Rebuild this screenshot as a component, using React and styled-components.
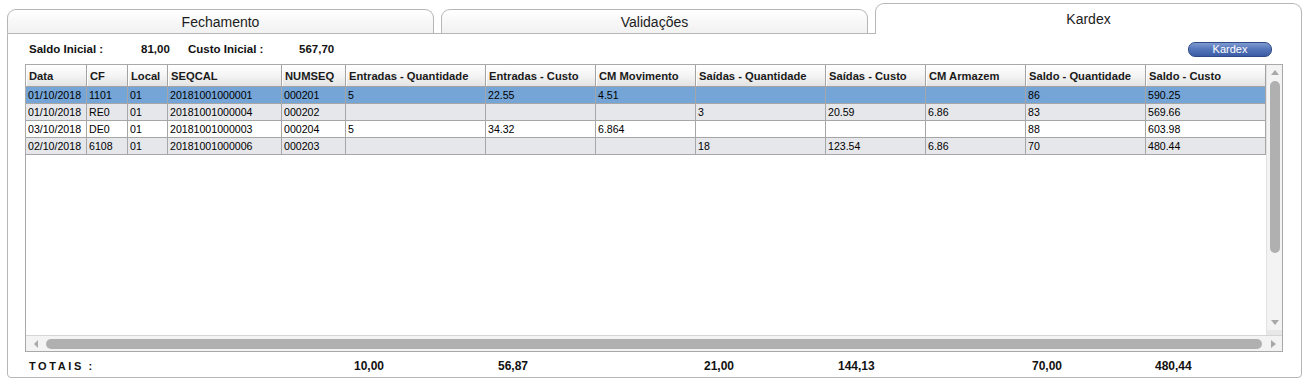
import React from 'react';
import styled, { createGlobalStyle } from 'styled-components';

const Global = createGlobalStyle`
  html, body { margin: 0; padding: 0; background: #ffffff; }
  body { font-family: "Liberation Sans", Arial, sans-serif; color: #000; }
  * { box-sizing: border-box; }
`;

const COLS = [61, 41, 40, 114, 64, 140, 110, 100, 130, 100, 100, 120, 120];
const TEMPLATE = COLS.map((c) => `${c}px`).join(' ');

const HEADERS = [
  'Data', 'CF', 'Local', 'SEQCAL', 'NUMSEQ', 'Entradas - Quantidade', 'Entradas - Custo',
  'CM Movimento', 'Saídas - Quantidade', 'Saídas - Custo', 'CM Armazem', 'Saldo - Quantidade', 'Saldo - Custo',
];

const ROWS = [
  ['01/10/2018', '1101', '01', '20181001000001', '000201', '5', '22.55', '4.51', '', '', '', '86', '590.25'],
  ['01/10/2018', 'RE0', '01', '20181001000004', '000202', '', '', '', '3', '20.59', '6.86', '83', '569.66'],
  ['03/10/2018', 'DE0', '01', '20181001000003', '000204', '5', '34.32', '6.864', '', '', '', '88', '603.98'],
  ['02/10/2018', '6108', '01', '20181001000006', '000203', '', '', '', '18', '123.54', '6.86', '70', '480.44'],
];

const TOTALS = [
  { col: 6, value: '10,00', indent: 8 },
  { col: 7, value: '56,87', indent: 12 },
  { col: 9, value: '21,00', indent: 8 },
  { col: 10, value: '144,13', indent: 12 },
  { col: 12, value: '70,00', indent: 6 },
  { col: 13, value: '480,44', indent: 9 },
];

const Page = styled.div`
  width: 1302px;
  padding: 3px 0 0 7px;
`;

const TabBar = styled.div`
  display: flex;
  align-items: flex-end;
  gap: 7px;
  height: 30px;
  position: relative;
  z-index: 1;
`;

const Tab = styled.div`
  flex: 1;
  height: ${(p) => (p.$active ? 31 : 24)}px;
  margin-bottom: ${(p) => (p.$active ? -1 : 0)}px;
  border: 1px solid #b6b6b6;
  border-bottom: none;
  border-radius: 9px 9px 0 0;
  background: ${(p) => (p.$active ? '#ffffff' : 'linear-gradient(#ffffff, #f1f1f1)')};
  display: flex;
  align-items: center;
  justify-content: center;
  font-size: 14px;
  color: #1c1c1c;
`;

const Panel = styled.div`
  width: 1295px;
  height: 345px;
  border: 1px solid #b6b6b6;
  border-radius: 0 0 4px 4px;
  padding: 7px 18px 0 17px;
  background: #fff;
`;

const InfoRow = styled.div`
  display: flex;
  align-items: center;
  height: 16px;
  padding: 0 11px 0 4px;
  font-size: 11.5px;
  font-weight: bold;
  color: #111;
`;

const InfoItem = styled.span`
  width: ${(p) => p.$w}px;
  white-space: nowrap;
`;

const KardexButton = styled.button`
  margin-left: auto;
  width: 84px;
  height: 15px;
  padding: 0;
  border: 1px solid #2f4b86;
  border-radius: 7px;
  background: linear-gradient(#7f9ad0 0%, #5777bb 45%, #3b5ca4 100%);
  color: #ffffff;
  font-family: "Liberation Sans", Arial, sans-serif;
  font-size: 11px;
  line-height: 13px;
`;

const TableBox = styled.div`
  margin-top: 7px;
  width: 1258px;
  height: 288px;
  border: 1px solid #a9a9a9;
  display: flex;
  flex-direction: column;
`;

const TopArea = styled.div`
  display: flex;
  height: 270px;
`;

const Viewport = styled.div`
  width: 1240px;
  height: 270px;
  overflow: hidden;
  background: #fff;
`;

const Grid = styled.div`
  display: grid;
  grid-template-columns: ${TEMPLATE};
`;

const HeadCell = styled.div`
  height: 22px;
  display: flex;
  align-items: center;
  padding-left: 3px;
  border-right: 1px solid #a3a3a3;
  border-bottom: 1px solid #a3a3a3;
  background: linear-gradient(#ffffff 0%, #f4f4f4 50%, #e3e3e3 100%);
  box-shadow: inset 1px 1px 0 #ffffff;
  font-size: 11.2px;
  font-weight: bold;
  color: #1a1a1a;
  white-space: nowrap;
  overflow: hidden;
`;

const Cell = styled.div`
  height: 17px;
  display: flex;
  align-items: center;
  padding-left: 2px;
  border-right: 1px solid #a6a6a6;
  border-bottom: 1px solid #a6a6a6;
  background: ${(p) => (p.$selected ? '#75a5d6' : p.$alt ? '#e5e7eb' : '#ffffff')};
  font-size: 10.6px;
  color: #000;
  white-space: nowrap;
  overflow: hidden;
`;

const VScroll = styled.div`
  width: 16px;
  height: 270px;
  display: flex;
  flex-direction: column;
  align-items: center;
  background: #f3f3f3;
  border-left: 1px solid #e2e2e2;
`;

const ArrowBox = styled.div`
  width: ${(p) => p.$w || 15}px;
  height: ${(p) => p.$h || 15}px;
  display: flex;
  align-items: center;
  justify-content: center;
  flex-shrink: 0;
`;

const VThumb = styled.div`
  width: 10px;
  height: 172px;
  margin-top: 1px;
  border-radius: 5px;
  background: #b0b0b0;
`;

const VTrack = styled.div`
  flex: 1;
`;

const VCorner = styled.div`
  width: 15px;
  height: 5px;
  background: #e8e8e8;
`;

const HScroll = styled.div`
  height: 16px;
  display: flex;
  align-items: center;
  background: #f3f3f3;
  border-top: 1px solid #d4d4d4;
`;

const HThumb = styled.div`
  flex: 1;
  height: 10px;
  margin-right: 3px;
  border-radius: 5px;
  background: #b0b0b0;
`;

const TotalsRow = styled.div`
  display: grid;
  grid-template-columns: ${TEMPLATE};
  margin-top: 2px;
  height: 23px;
  padding-left: 1px;
  align-items: center;
  font-weight: bold;
  color: #111;
`;

const TotalsLabel = styled.div`
  grid-column: 1 / 6;
  padding-left: 3px;
  font-size: 11px;
  letter-spacing: 2.6px;
  word-spacing: -1px;
`;

const TotalValue = styled.div`
  grid-column: ${(p) => p.$col};
  padding-left: ${(p) => p.$indent}px;
  font-size: 12px;
`;

const Tri = ({ dir }) => {
  const pts = {
    up: '0,6 4,1 8,6',
    down: '0,1 4,6 8,1',
    left: '5,0 1,4 5,8',
    right: '1,0 6,4 1,8',
  }[dir];
  const horiz = dir === 'left' || dir === 'right';
  return (
    <svg width={horiz ? 7 : 8} height={horiz ? 8 : 7} viewBox={horiz ? '0 0 7 8' : '0 0 8 7'}>
      <polygon points={pts} fill="#a8a8a8" />
    </svg>
  );
};

export default function App() {
  return (
    <Page>
      <Global />
      <TabBar>
        <Tab>Fechamento</Tab>
        <Tab>Validações</Tab>
        <Tab $active>Kardex</Tab>
      </TabBar>
      <Panel>
        <InfoRow>
          <InfoItem $w={112}>Saldo Inicial :</InfoItem>
          <InfoItem $w={47}>81,00</InfoItem>
          <InfoItem $w={111}>Custo Inicial :</InfoItem>
          <InfoItem $w={60}>567,70</InfoItem>
          <KardexButton>Kardex</KardexButton>
        </InfoRow>
        <TableBox>
          <TopArea>
            <Viewport>
              <Grid>
                {HEADERS.map((h) => (
                  <HeadCell key={h}>{h}</HeadCell>
                ))}
                {ROWS.map((r, ri) =>
                  r.map((v, ci) => (
                    <Cell key={`${ri}-${ci}`} $selected={ri === 0} $alt={ri % 2 === 1}>
                      {v}
                    </Cell>
                  ))
                )}
              </Grid>
            </Viewport>
            <VScroll>
              <ArrowBox $h={15}><Tri dir="up" /></ArrowBox>
              <VThumb />
              <VTrack />
              <ArrowBox $h={16}><Tri dir="down" /></ArrowBox>
              <VCorner />
            </VScroll>
          </TopArea>
          <HScroll>
            <ArrowBox $w={20}><Tri dir="left" /></ArrowBox>
            <HThumb />
            <ArrowBox $w={17}><Tri dir="right" /></ArrowBox>
          </HScroll>
        </TableBox>
        <TotalsRow>
          <TotalsLabel>TOTAIS :</TotalsLabel>
          {TOTALS.map((t) => (
            <TotalValue key={t.col} $col={t.col} $indent={t.indent}>
              {t.value}
            </TotalValue>
          ))}
        </TotalsRow>
      </Panel>
    </Page>
  );
}
